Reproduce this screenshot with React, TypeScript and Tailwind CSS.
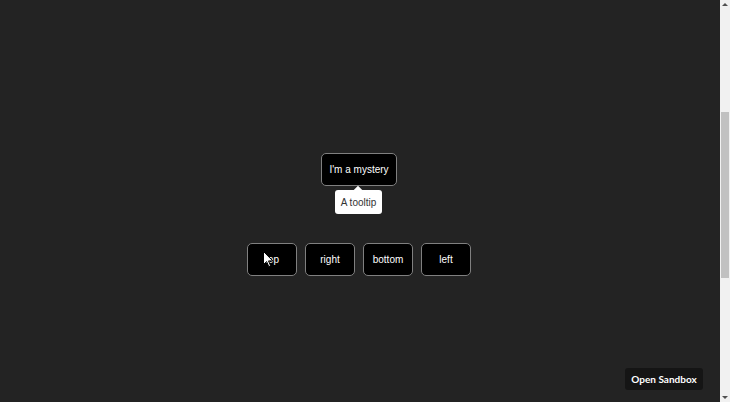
import React from 'react';

const placements = ['top', 'right', 'bottom', 'left'];

const Cursor: React.FC = () => (
  <svg
    className="absolute left-[15px] top-[7px]"
    width="11"
    height="17"
    viewBox="0 0 11 17"
  >
    <path d="M0.5 0.5 L0.5 13.5 L3.6 10.6 L5.8 15.6 L7.6 14.8 L5.5 9.9 L9.8 9.9 Z" fill="#ffffff" stroke="#000000" strokeWidth="1" />
  </svg>
);

const App: React.FC = () => {
  return (
    <div className="flex w-[730px] h-[402px] overflow-hidden bg-[#232323]" style={{ fontFamily: '"Liberation Sans", Arial, sans-serif' }}>
      {/* Main area */}
      <div className="flex flex-col items-center w-[720px] h-full pt-[153px]">
        <div className="flex items-center justify-center w-[76px] h-[33px] -ml-[2px] rounded-[5px] border border-[#808080] bg-black text-white text-[10px]">
          I'm a mystery
        </div>

        {/* Tooltip */}
        <div className="relative mt-[4px] -ml-[3px] flex items-center justify-center w-[47px] h-[24px] rounded-[3px] bg-white text-[#333333] text-[10px]">
          <span className="absolute -top-[3px] left-[20px] w-[6px] h-[6px] rotate-45 bg-white" />
          <span className="relative">A tooltip</span>
        </div>

        {/* Placement buttons */}
        <div className="flex gap-[8px] mt-[29px] -ml-[2px]">
          {placements.map((p) => (
            <button
              key={p}
              className="relative flex items-center justify-center w-[50px] h-[33px] rounded-[5px] border border-[#808080] bg-black text-white text-[10px]"
            >
              {p}
              {p === 'top' && <Cursor />}
            </button>
          ))}
        </div>

        <div className="flex-1" />

        <button
          className="self-end mr-[17px] mb-[12px] w-[78px] h-[22px] flex items-center justify-center rounded-[3px] bg-[#151515] text-white text-[10px] font-bold"
          style={{ fontFamily: 'Lato, sans-serif' }}
        >
          Open Sandbox
        </button>
      </div>

      {/* Scrollbar */}
      <div className="flex flex-col w-[10px] h-full bg-[#f1f1f1]">
        <div className="flex items-start justify-center h-[10px] pt-[3px]">
          <span className="w-0 h-0 border-x-[3px] border-x-transparent border-b-[3px] border-b-[#505050]" />
        </div>
        <div className="h-[102px]" />
        <div className="mx-[1px] h-[166px] bg-[#c1c1c1]" />
        <div className="flex-1" />
        <div className="flex items-end justify-center h-[10px] pb-[3px]">
          <span className="w-0 h-0 border-x-[3px] border-x-transparent border-t-[3px] border-t-[#505050]" />
        </div>
      </div>
    </div>
  );
};

export default App;
